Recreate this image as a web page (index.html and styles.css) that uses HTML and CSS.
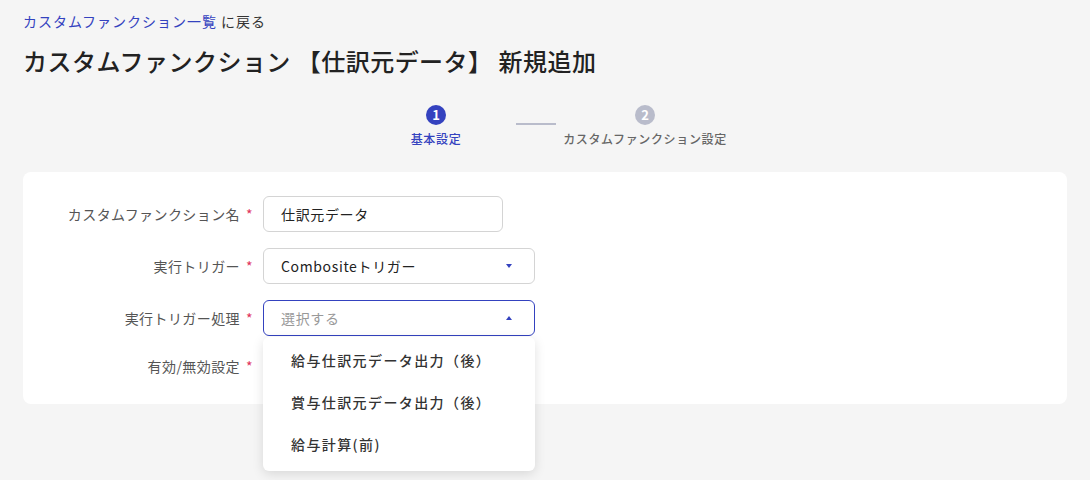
FILE: index.html
```html
<!DOCTYPE html>
<html lang="ja">
<head>
    <meta charset="UTF-8">
    <meta name="viewport" content="width=device-width, initial-scale=1.0">
    <title>カスタムファンクション 新規追加</title>
    <link rel="stylesheet" href="styles.css">
</head>
<body>
    <div class="page">
        <div class="breadcrumb">
            <a href="#" class="back-link">カスタムファンクション一覧</a> に戻る
        </div>

        <h1 class="title">カスタムファンクション 【仕訳元データ】 新規追加</h1>

        <div class="stepper">
            <div class="step active">
                <div class="step-num">1</div>
                <div class="step-label">基本設定</div>
            </div>
            <div class="step-line"></div>
            <div class="step">
                <div class="step-num">2</div>
                <div class="step-label">カスタムファンクション設定</div>
            </div>
        </div>

        <div class="card">
            <div class="form-grid">
                <label class="form-label">カスタムファンクション名<span class="req">*</span></label>
                <div class="field">
                    <div class="input input-name">仕訳元データ</div>
                </div>

                <label class="form-label">実行トリガー<span class="req">*</span></label>
                <div class="field">
                    <div class="input select">
                        <span>Combositeトリガー</span>
                        <span class="caret down"></span>
                    </div>
                </div>

                <label class="form-label">実行トリガー処理<span class="req">*</span></label>
                <div class="field dropdown">
                    <div class="input select focused">
                        <span class="placeholder">選択する</span>
                        <span class="caret up"></span>
                    </div>
                    <ul class="menu">
                        <li class="menu-item">給与仕訳元データ出力（後）</li>
                        <li class="menu-item">賞与仕訳元データ出力（後）</li>
                        <li class="menu-item">給与計算(前)</li>
                    </ul>
                </div>

                <label class="form-label toggle-row">有効/無効設定<span class="req">*</span></label>
                <div class="toggle-row"></div>
            </div>
        </div>
    </div>
</body>
</html>
```

FILE: styles.css
```css
:root {
    --bg: #f5f5f5;
    --card: #ffffff;
    --text: #222222;
    --label: #555555;
    --primary: #3442bf;
    --muted: #b9bccb;
    --border: #d4d4d4;
    --required: #e0335c;
}

* {
    box-sizing: border-box;
}

html,
body {
    height: 100%;
}

body {
    margin: 0;
    background-color: var(--bg);
    color: var(--text);
    font-family: "Noto Sans CJK JP", "Noto Sans", sans-serif;
    letter-spacing: 0.04em;
}

.page {
    min-height: 100%;
    padding: 11px 23px 0;
}

.breadcrumb {
    font-size: 14px;
    line-height: 20px;
    color: #333;
    letter-spacing: 0.07em;
}

.back-link {
    color: var(--primary);
    text-decoration: none;
}

.title {
    margin: 14px 0 0;
    font-size: 24px;
    line-height: 32px;
    font-weight: 500;
    letter-spacing: 0.02em;
}

/* stepper */
.stepper {
    display: flex;
    justify-content: center;
    align-items: flex-start;
    margin-top: 28px;
    padding-right: 9px;
}

.step {
    width: 160px;
    display: flex;
    flex-direction: column;
    align-items: center;
}

.step-num {
    width: 20px;
    height: 20px;
    border-radius: 50%;
    background-color: var(--muted);
    color: #fff;
    font-size: 13px;
    font-weight: 700;
    line-height: 20px;
    text-align: center;
    letter-spacing: 0;
}

.step.active .step-num {
    background-color: var(--primary);
}

.step-label {
    margin-top: 6px;
    font-size: 12px;
    line-height: 16px;
    font-weight: 500;
    color: #666;
    white-space: nowrap;
}

.step.active .step-label {
    color: var(--primary);
}

.step-line {
    width: 40px;
    height: 2px;
    margin: 18px 9px 0 0;
    background-color: var(--muted);
}

/* card */
.card {
    margin-top: 25px;
    background-color: var(--card);
    border-radius: 8px;
    padding: 24px 0 24px;
}

.form-grid {
    display: grid;
    grid-template-columns: 230px 1fr;
    column-gap: 10px;
    row-gap: 16px;
    align-items: center;
}

.form-label {
    text-align: right;
    font-size: 14px;
    color: var(--label);
    letter-spacing: 0.03em;
}

.req {
    color: var(--required);
    margin-left: 6px;
}

.field {
    position: relative;
    z-index: 5;
}

.toggle-row {
    height: 28px;
    line-height: 28px;
}

.input {
    height: 36px;
    border: 1px solid var(--border);
    border-radius: 6px;
    padding: 0 17px;
    font-size: 14px;
    line-height: 34px;
    color: var(--text);
    background-color: #fff;
}

.input-name {
    width: 240px;
}

.select {
    width: 272px;
    display: flex;
    justify-content: space-between;
    align-items: center;
    padding-right: 22px;
}

.select.focused {
    border-color: var(--primary);
}

.placeholder {
    color: #999;
}

.caret {
    width: 0;
    height: 0;
    border-left: 3.5px solid transparent;
    border-right: 3.5px solid transparent;
}

.caret.down {
    border-top: 4px solid var(--primary);
}

.caret.up {
    border-bottom: 4px solid var(--primary);
}

/* dropdown menu */
.menu {
    position: absolute;
    top: 37px;
    left: 0;
    width: 272px;
    margin: 0;
    padding: 2px 0 6px;
    list-style: none;
    background-color: #fff;
    border-radius: 6px;
    box-shadow: 0 3px 12px rgba(0, 0, 0, 0.12);
    z-index: 10;
}

.menu-item {
    height: 42px;
    line-height: 42px;
    padding-left: 28px;
    font-size: 14px;
    font-weight: 500;
    color: #333;
    letter-spacing: 0.1em;
}
```
